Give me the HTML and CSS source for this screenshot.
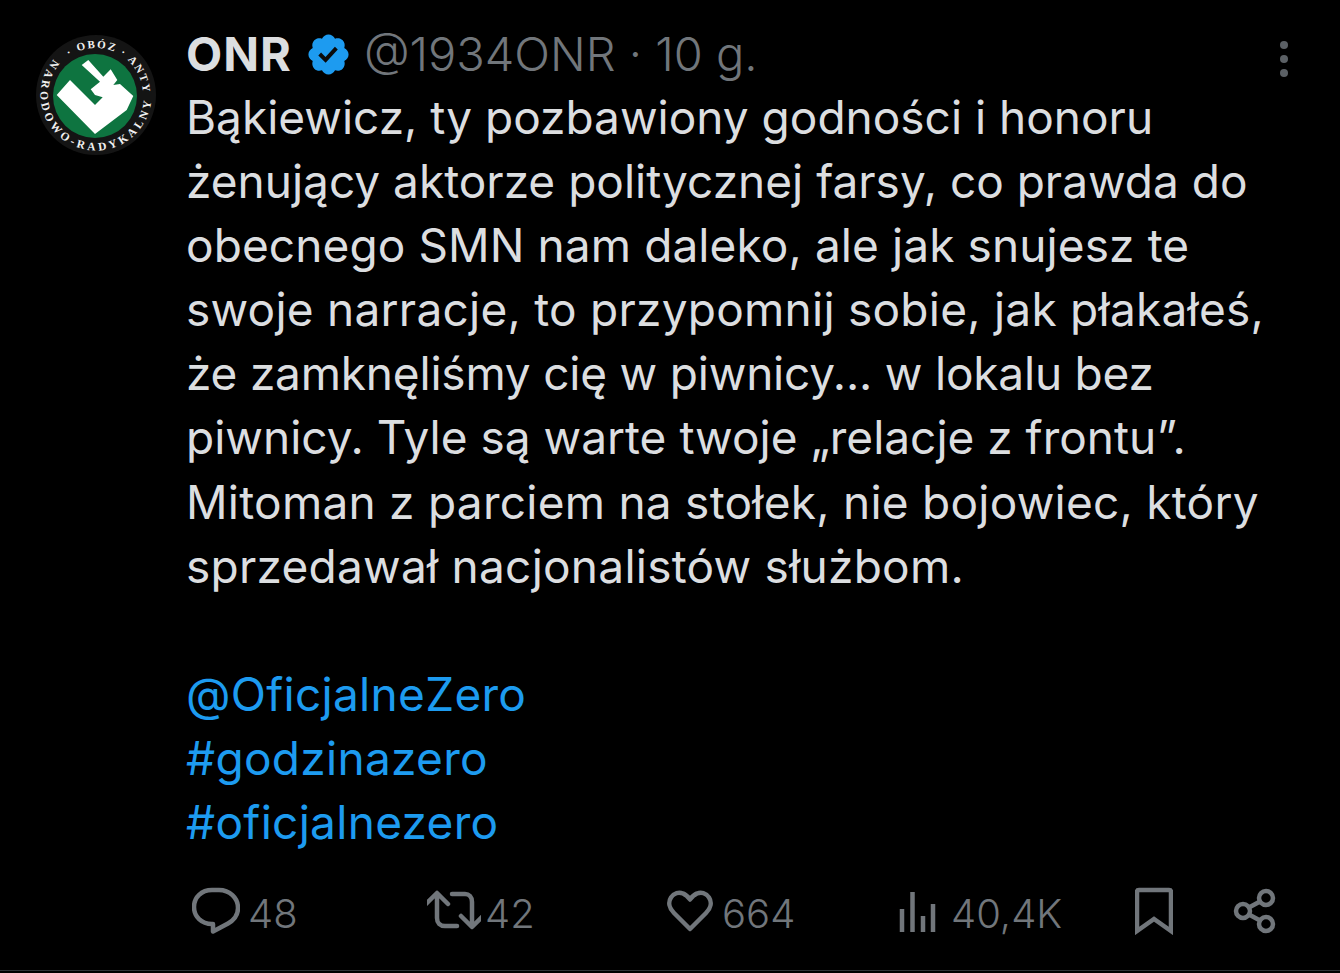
FILE: index.html
```html
<!DOCTYPE html>
<html lang="pl">
<head>
<meta charset="utf-8">
<title>ONR</title>
<link rel="stylesheet" href="styles.css">
</head>
<body>
<article class="tweet">
  <div class="avatar-col">
    <svg class="avatar" viewBox="0 0 120 120">
      <defs>
        <path id="ring-top" d="M33 21.500A47 47 0 0 1 96 90.200"/>
        <path id="ring-bottom" d="M17.500 24.300A55.500 55.500 0 1 0 112.200 41"/>
      </defs>
      <circle cx="60" cy="60" r="60" fill="#141414"/>
      <circle cx="59" cy="61" r="42" fill="#0e7440"/>
      <path class="logo-mark" d="M20.700 60 34 45 59 70 66.700 62.300 59 60 54.700 54.300 64 46.700 45.700 30 52.300 25 67.300 41.700 74.700 34.300 81.300 45 77.300 50 84 49 97.300 61 90.700 75 59 99z"/>
      <text class="ring-text ring-upper"><textPath href="#ring-top">· OBÓZ · ANTY</textPath></text>
      <text class="ring-text ring-lower"><textPath href="#ring-bottom">NARODOWO-RADYKALNY</textPath></text>
    </svg>
  </div>
  <div class="main">
    <header class="head">
      <div class="head-left">
        <span class="name">ONR</span>
        <svg class="badge" viewBox="0 0 24 24"><path fill="#1d9bf0" d="M22.250 12c0-1.430-.880-2.670-2.190-3.340.460-1.390.200-2.900-.810-3.910s-2.520-1.270-3.910-.810c-.660-1.310-1.910-2.190-3.340-2.190s-2.670.880-3.330 2.190c-1.400-.460-2.910-.200-3.920.810s-1.260 2.520-.800 3.910c-1.310.670-2.200 1.910-2.200 3.340s.890 2.670 2.200 3.340c-.460 1.390-.210 2.900.800 3.910s2.520 1.260 3.910.810c.670 1.310 1.910 2.190 3.340 2.190s2.680-.880 3.340-2.190c1.390.450 2.900.200 3.910-.810s1.270-2.520.810-3.910c1.310-.670 2.190-1.910 2.190-3.340z"/><path fill="#0a0a0a" d="M10.540 16.200 6.800 12.460l1.410-1.420 2.260 2.270 4.800-5.230 1.470 1.360z"/></svg>
        <span class="handle">@1934ONR · 10 g.</span>
      </div>
      <svg class="more" viewBox="0 0 10 38"><circle cx="5" cy="5" r="4"/><circle cx="5" cy="19" r="4"/><circle cx="5" cy="33" r="4"/></svg>
    </header>
    <div class="body">
      <p class="line">Bąkiewicz, ty pozbawiony godności i honoru</p>
      <p class="line">żenujący aktorze politycznej farsy, co prawda do</p>
      <p class="line slight">obecnego SMN nam daleko, ale jak snujesz te</p>
      <p class="line loose">swoje narracje, to przypomnij sobie, jak płakałeś,</p>
      <p class="line tight">że zamknęliśmy cię w piwnicy... w lokalu bez</p>
      <p class="line">piwnicy. Tyle są warte twoje „relacje z frontu”.</p>
      <p class="line loose">Mitoman z parciem na stołek, nie bojowiec, który</p>
      <p class="line loose">sprzedawał nacjonalistów służbom.</p>
    </div>
    <div class="links">
      <p class="line">@OficjalneZero</p>
      <p class="line">#godzinazero</p>
      <p class="line">#oficjalnezero</p>
    </div>
    <footer class="actions">
      <div class="action reply">
        <svg class="icon" viewBox="0 0 48 48"><path d="M20 3h7c10.500 0 19 7.800 19 18 0 7-4.300 12.300-10 15.500L21 44.500V37h-1C9.500 37 2 29.700 2 20S9.500 3 20 3z"/></svg>
        <span class="count">48</span>
      </div>
      <div class="action retweet">
        <svg class="icon" viewBox="0 0 54 42"><path d="M-1 14 10 3l11 11M10 4v24c0 5 3 8 8 8h12M25 4h13c4 0 7 3 7 8v24M34 26l11 11 11-11"/></svg>
        <span class="count">42</span>
      </div>
      <div class="action like">
        <svg class="icon" viewBox="0 0 46 42"><path d="M23 39 7 23C2 18 1 12 4 7.500 7 3 12 2 16 3.500c3 1 5 3.300 7 6 2-2.700 4-5 7-6C34 2 39 3 42 7.500 45 12 44 18 39 23z"/></svg>
        <span class="count">664</span>
      </div>
      <div class="action views">
        <svg class="icon" viewBox="0 0 38 42"><path d="M3 19V42M13.500 2V42M24 26V42M34 14V42"/></svg>
        <span class="count">40,4K</span>
      </div>
      <div class="tools">
        <svg class="icon bookmark" viewBox="0 0 38 48"><path d="M2 44V5q0-2 2-2h30q2 0 2 2v39L19 32z"/></svg>
        <svg class="icon share" viewBox="0 0 44 46"><circle cx="33" cy="10" r="7"/><circle cx="10" cy="23" r="7"/><circle cx="33" cy="36" r="7"/><path d="M16 19.500 27 13.500M16 26.500 27 32.500"/></svg>
      </div>
    </footer>
  </div>
</article>
</body>
</html>
```
FILE: styles.css
```css
* { box-sizing: border-box; }
html, body { margin: 0; height: 100%; background: #000; }
body { width: 1340px; height: 973px; overflow: hidden; font-family: Inter, Roboto, sans-serif; color: #dcdee0; }
.tweet { display: flex; height: 971px; border-bottom: 1px solid #2f3336; padding: 35px 0 0 36px; }
.avatar-col { width: 150px; flex: none; }
.avatar { display: block; width: 120px; height: 120px; }
.logo-mark { fill: #fff; }
.ring-text { fill: #f1f1f1; font-family: "Liberation Serif", serif; font-weight: 700; }
.ring-upper { font-size: 11px; letter-spacing: 1.800px; }
.ring-lower { font-size: 11.500px; letter-spacing: 3.300px; }
.main { flex: 1; min-width: 0; display: flex; flex-direction: column; padding-right: 51px; }
.head { display: flex; justify-content: space-between; align-items: flex-start; height: 50px; }
.head-left { display: flex; align-items: center; height: 38px; }
.name { font-size: 47px; font-weight: 700; line-height: 38px; letter-spacing: 1px; color: #dcdee0; }
.badge { width: 47px; height: 47px; margin: 0 12px 0 13px; }
.handle { font-size: 47px; font-weight: 300; line-height: 38px; color: #71767b; }
.more { width: 10px; height: 38px; fill: #5b6065; margin-top: 5px; }
.body, .links { font-size: 46px; font-weight: 400; white-space: nowrap; }
.line { margin: 0; line-height: 64.100px; }
.loose { letter-spacing: .25px; }
.slight { letter-spacing: .1px; }
.tight { letter-spacing: -.2px; }
.body { color: #dcdee0; }
.links { margin-top: 64px; color: #1d9bf0; letter-spacing: .3px; }
.actions { display: flex; align-items: center; margin-top: 35px; height: 50px; padding-left: 1px; color: #71767b; }
.action { display: flex; align-items: center; gap: 8px; flex: none; }
.icon { display: block; fill: none; stroke: #71767b; stroke-width: 4.500; stroke-linejoin: round; stroke-linecap: round; margin-bottom: 6px; }
.count { font-size: 40px; font-weight: 300; line-height: 50px; }
.reply { width: 240px; padding-left: 5px; }
.reply .icon { width: 48px; height: 48px; }
.retweet { width: 240px; gap: 4px; }
.retweet .icon { width: 54px; height: 42px; }
.like { width: 232px; gap: 9px; }
.like .icon { width: 46px; height: 42px; }
.views { gap: 14px; width: 236px; }
.views .icon { width: 38px; height: 42px; stroke-linecap: butt; }
.tools { display: flex; align-items: center; gap: 60px; }
.bookmark { width: 38px; height: 48px; }
.bookmark path { stroke-linecap: butt; stroke-linejoin: miter; }
.share { width: 44px; height: 46px; }
```
